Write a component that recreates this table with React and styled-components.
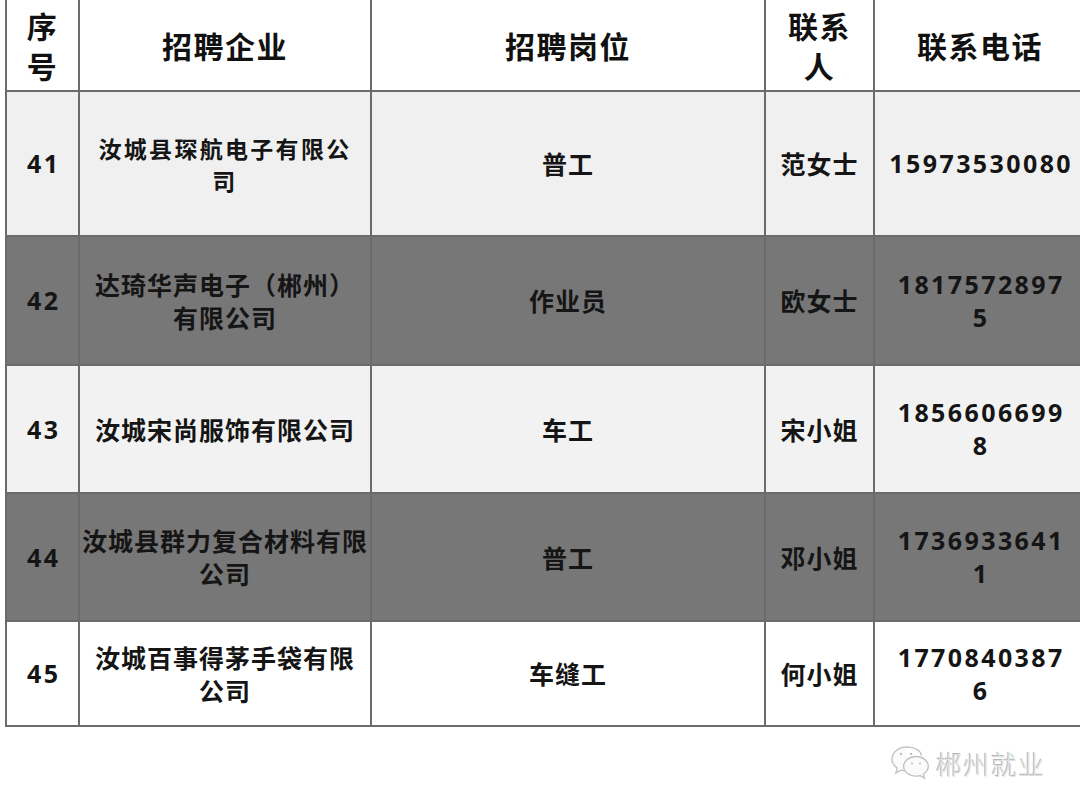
import React from "react";
import styled, { createGlobalStyle } from "styled-components";

const GlobalStyle = createGlobalStyle`
  html, body {
    margin: 0;
    padding: 0;
    background: #ffffff;
    overflow: hidden;
  }
  body {
    font-family: "Noto Sans", "Noto Sans CJK SC", sans-serif;
  }
`;

const COLS = "73px 292px 394px 109px 212px";
const LINE = "#6b6b6b";

const Page = styled.div`
  width: 1080px;
  height: 810px;
  padding-left: 5px;
  box-sizing: border-box;
  overflow: hidden;
`;

const Table = styled.div`
  display: flex;
  flex-direction: column;
  width: 1080px;
  border-left: 2px solid ${LINE};
`;

const Row = styled.div`
  display: grid;
  grid-template-columns: ${COLS};
  height: ${(p) => p.$h}px;
  background: ${(p) => p.$bg};
  border-bottom: 2px solid ${LINE};
  box-sizing: border-box;
`;

const Cell = styled.div`
  display: flex;
  align-items: center;
  justify-content: center;
  text-align: center;
  border-right: 2px solid ${LINE};
  box-sizing: border-box;
  color: #111;
  font-family: "Noto Sans", "Noto Sans CJK SC", sans-serif;
  font-weight: 700;
  white-space: nowrap;
`;

const HeadText = styled.div`
  font-family: "Noto Sans CJK SC", sans-serif;
  font-size: 30px;
  line-height: 40px;
  letter-spacing: 1.5px;
  font-weight: 700;
  color: #111;
`;

const BodyText = styled.div`
  font-family: "Noto Sans CJK SC", sans-serif;
  font-size: ${(p) => p.$size || 25}px;
  line-height: ${(p) => p.$lh || 33}px;
  letter-spacing: ${(p) => p.$ls ?? 1}px;
  font-weight: 700;
  color: #151515;
`;

const Num = styled.div`
  font-family: "Noto Sans", "Noto Sans CJK SC", sans-serif;
  font-size: 25px;
  line-height: 33px;
  letter-spacing: 2.4px;
  font-weight: 700;
  color: #151515;
  margin-right: -2.4px;
`;

const Footer = styled.div`
  display: flex;
  justify-content: flex-end;
  align-items: center;
  gap: 6px;
  padding: 17px 34px 0 0;
`;

const Mark = styled.span`
  font-family: "Noto Sans CJK SC", sans-serif;
  font-size: 26px;
  font-weight: 300;
  letter-spacing: 1.5px;
  color: #e0e0e0;
  text-shadow: -1px -1px 0 #b5b5b5, 1px 1px 0 #ffffff;
`;

const Lines = ({ lines }) =>
  lines.map((l, i) => <div key={i}>{l}</div>);

const rows = [
  { no: "41", h: 145, bg: "#f0f0f0", co: ["汝城县琛航电子有限公", "司"], coSize: 23, coLs: 2.3, coLh: 32, job: "普工", ct: "范女士", ph: ["15973530080"] },
  { no: "42", h: 129, bg: "#777777", co: ["达琦华声电子（郴州）", "有限公司"], job: "作业员", ct: "欧女士", ph: ["1817572897", "5"] },
  { no: "43", h: 128, bg: "#f2f2f2", co: ["汝城宋尚服饰有限公司"], job: "车工", ct: "宋小姐", ph: ["1856606699", "8"] },
  { no: "44", h: 128, bg: "#777777", co: ["汝城县群力复合材料有限", "公司"], job: "普工", ct: "邓小姐", ph: ["1736933641", "1"] },
  { no: "45", h: 105, bg: "#ffffff", co: ["汝城百事得茅手袋有限", "公司"], job: "车缝工", ct: "何小姐", ph: ["1770840387", "6"] },
];

const WeChatIcon = () => (
  <svg width="40" height="38" viewBox="0 0 40 38" fill="none" stroke="#c4c4c4" strokeWidth="1.4">
    <path d="M17 3C8.5 3 2 8.4 2 15c0 3.7 2 6.9 5.2 9.1L5.8 29l5.3-2.8c1.6.5 3.3.8 5 .8" fill="#fbfbfb" />
    <path d="M26 12.5c-6.9 0-12.4 4.4-12.4 9.8s5.5 9.8 12.4 9.8c1.4 0 2.7-.2 4-.5l4.6 2.5-1.2-4c2.9-1.9 4.9-4.6 4.9-7.8 0-5.4-5.4-9.8-12.3-9.8z" fill="#fbfbfb" />
    <path d="M31.5 11.5C30.6 6.6 24.6 3 17 3" />
    <circle cx="11" cy="10" r="1.3" fill="#c4c4c4" stroke="none" />
    <circle cx="21" cy="10" r="1.3" fill="#c4c4c4" stroke="none" />
    <circle cx="22" cy="19.5" r="1.1" fill="#c4c4c4" stroke="none" />
    <circle cx="30" cy="19.5" r="1.1" fill="#c4c4c4" stroke="none" />
  </svg>
);

export default function App() {
  return (
    <>
      <GlobalStyle />
      <Page>
        <Table>
          <Row $h={92} $bg="#ffffff">
            <Cell><HeadText><Lines lines={["序", "号"]} /></HeadText></Cell>
            <Cell><HeadText>招聘企业</HeadText></Cell>
            <Cell><HeadText>招聘岗位</HeadText></Cell>
            <Cell><HeadText><Lines lines={["联系", "人"]} /></HeadText></Cell>
            <Cell><HeadText>联系电话</HeadText></Cell>
          </Row>
          {rows.map((r) => (
            <Row key={r.no} $h={r.h} $bg={r.bg}>
              <Cell><Num>{r.no}</Num></Cell>
              <Cell><BodyText $size={r.coSize} $ls={r.coLs} $lh={r.coLh}><Lines lines={r.co} /></BodyText></Cell>
              <Cell><BodyText>{r.job}</BodyText></Cell>
              <Cell><BodyText>{r.ct}</BodyText></Cell>
              <Cell><Num><Lines lines={r.ph} /></Num></Cell>
            </Row>
          ))}
        </Table>
        <Footer>
          <WeChatIcon />
          <Mark>郴州就业</Mark>
        </Footer>
      </Page>
    </>
  );
}
